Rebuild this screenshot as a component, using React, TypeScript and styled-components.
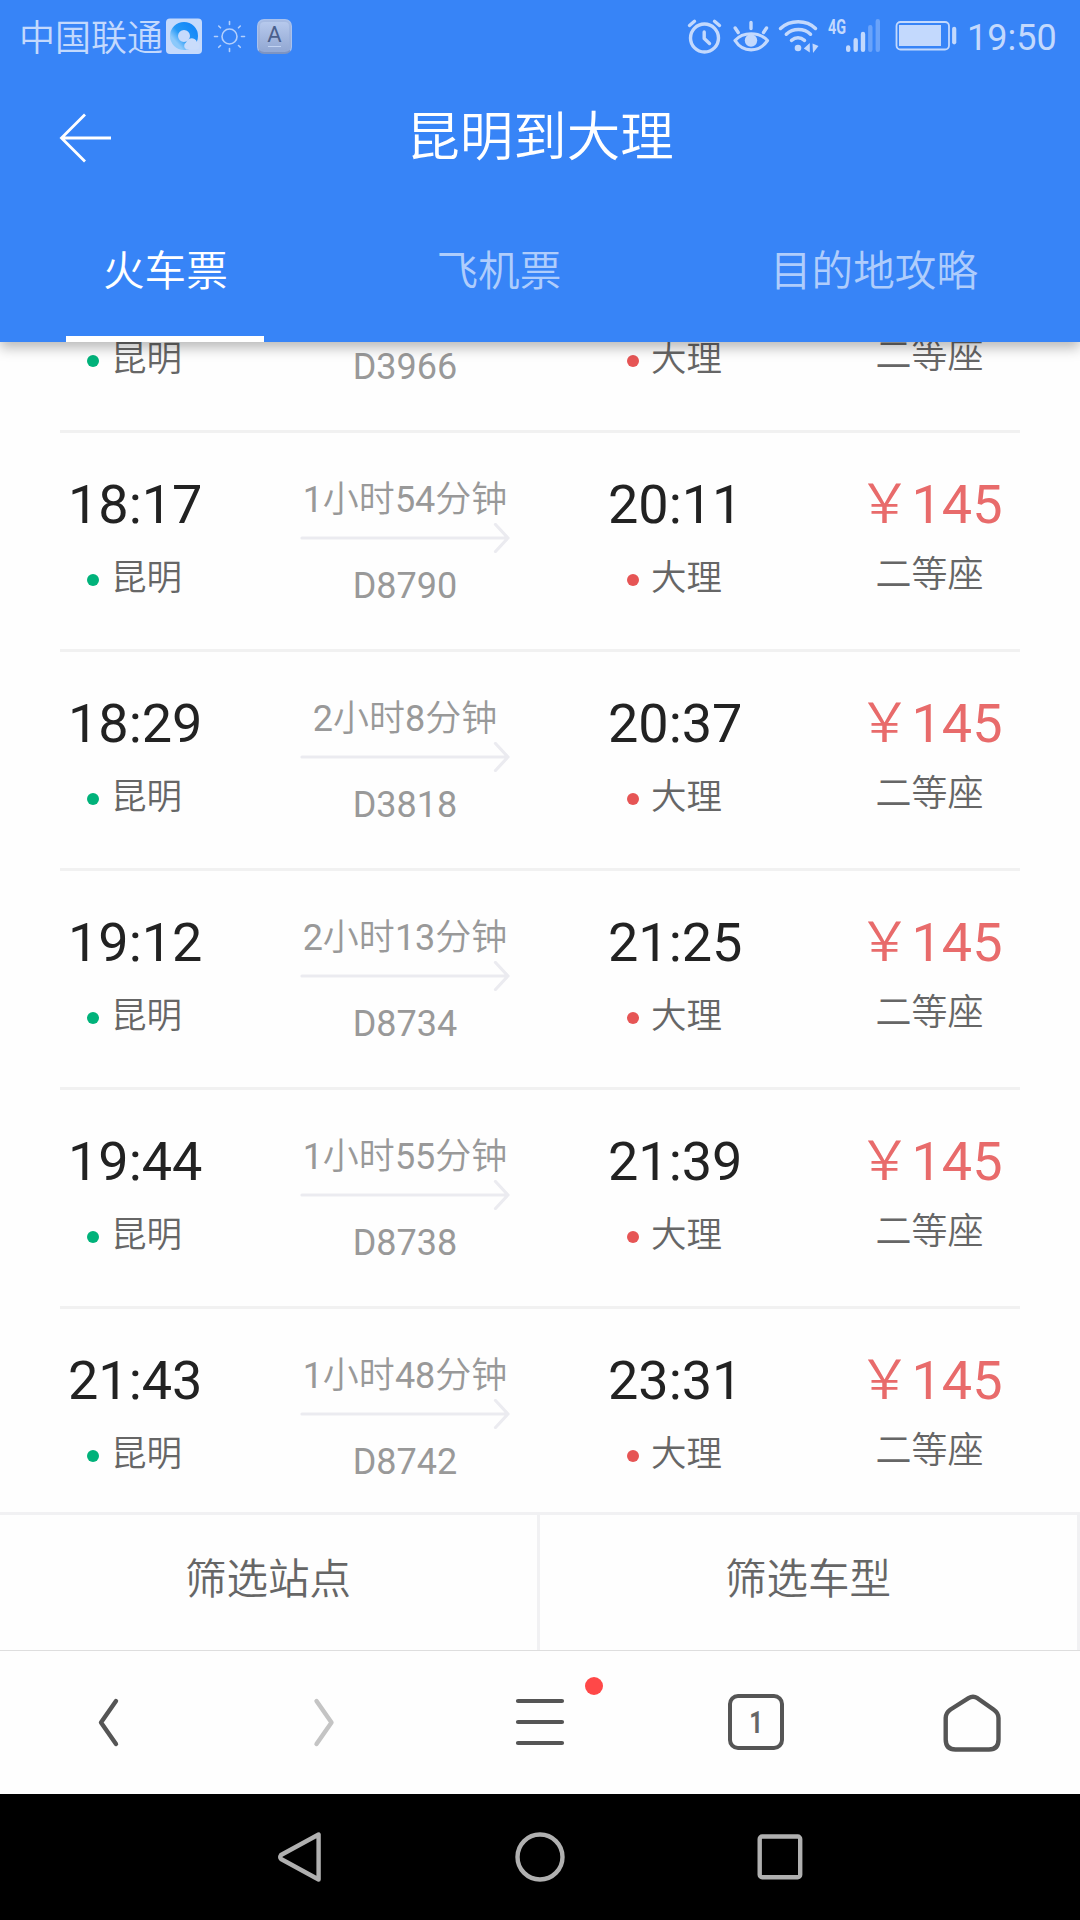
import React from 'react';
import styled, { createGlobalStyle } from 'styled-components';

const GlobalStyle = createGlobalStyle`
  * { box-sizing: border-box; }
  body {
    margin: 0;
    background: #fff;
    font-family: Roboto, "Noto Sans CJK SC", sans-serif;
  }
`;

const Screen = styled.div`
  width: 1080px;
  height: 1920px;
  display: flex;
  flex-direction: column;
  overflow: hidden;
  background: #fefefe;
`;

const Header = styled.header`
  position: relative;
  z-index: 1;
  flex: none;
  height: 342px;
  display: flex;
  flex-direction: column;
  background: #3784f7;
  box-shadow: 0 6px 12px rgba(0, 0, 0, 0.27);
`;

const StatusBar = styled.div`
  height: 74px;
  display: flex;
  align-items: center;
  padding: 0 25px 0 19px;
  color: #c3d9fd;
  svg { display: block; flex: none; }
`;

const Carrier = styled.span`
  width: 145px;
  font-size: 36px;
  font-weight: 350;
  line-height: 40px;
  white-space: nowrap;
  padding-top: 3px;
`;

const Spacer = styled.div`
  flex: 1;
`;

const KeyBadge = styled.span`
  width: 35px;
  height: 35px;
  margin: 0 0 2px 10px;
  border-radius: 7px;
  border: 1px solid #a9c2ee;
  border-bottom: 2px solid #7d94c2;
  background: linear-gradient(#b9cbee, #91a7d2);
  box-shadow: inset 0 0 0 2px rgba(150, 172, 216, 0.5);
  color: #4a5f8c;
  font-size: 22px;
  line-height: 26px;
  padding-top: 2px;
  text-align: center;
  display: flex;
  flex-direction: column;
  align-items: center;
`;

const KeyLine = styled.i`
  width: 13px;
  height: 1px;
  margin-top: -2px;
  background: #c3d4f2;
`;

const NetworkType = styled.span`
  width: 18px;
  height: 74px;
  padding-top: 17px;
  font-size: 20px;
  font-weight: 700;
  line-height: 20px;
  transform: scaleX(0.72);
  transform-origin: 0 0;
`;

const Clock = styled.span`
  width: 88px;
  font-size: 36px;
  line-height: 40px;
  padding-top: 1px;
  white-space: nowrap;
`;

const TitleBar = styled.div`
  height: 124px;
  display: grid;
  grid-template-columns: 112px 1fr 112px;
  align-items: center;
  svg { display: block; margin: 4px 0 0 58px; }
`;

const Title = styled.h1`
  margin: 3px 0 0;
  color: #fff;
  font-size: 53.5px;
  font-weight: 350;
  line-height: 64px;
  text-align: center;
`;

const Tabs = styled.nav`
  flex: 1;
  display: flex;
  justify-content: space-between;
  padding: 0 66px;
`;

const Tab = styled.button<{ $active?: boolean }>`
  border: 0;
  border-bottom: 6px solid ${p => (p.$active ? '#fff' : 'transparent')};
  background: none;
  padding: 10px 36px 0 37px;
  color: ${p => (p.$active ? '#fff' : '#afcdfc')};
  font: 350 41.600px/48px Roboto, "Noto Sans CJK SC", sans-serif;
`;

const ListViewport = styled.main`
  flex: none;
  height: 1170px;
  overflow: hidden;
`;

const List = styled.ul`
  list-style: none;
  margin: -128px 60px 0;
  padding: 0;
`;

const TrainRow = styled.li`
  height: 219px;
  display: grid;
  grid-template-columns: 240px 300px 240px 180px;
  border-bottom: 3px solid #f1f1f1;
`;

const Stop = styled.div`
  display: flex;
  flex-direction: column;
  padding: 42px 0 0 8px;
`;

const Time = styled.strong`
  height: 60px;
  color: #222;
  font-size: 54px;
  font-weight: 400;
  line-height: 60px;
`;

const Station = styled.span<{ $dot: string }>`
  display: flex;
  align-items: center;
  gap: 12px;
  margin: 23px 0 0 19px;
  color: #666;
  font-size: 35.5px;
  font-weight: 350;
  line-height: 40px;
  &::before {
    content: '';
    width: 12px;
    height: 12px;
    margin-top: 4px;
    border-radius: 50%;
    background: ${p => p.$dot};
  }
`;

const Journey = styled.div`
  width: 210px;
  display: flex;
  flex-direction: column;
  align-items: center;
  padding-top: 47px;
  color: #999;
  font-size: 36px;
  line-height: 40px;
  white-space: nowrap;
  svg { display: block; margin: 3px 0 13px; }
`;

const Duration = styled.span`
  height: 40px;
`;

const Han = styled.span`
  font-weight: 350;
`;

const Num = styled.span`
  font-weight: 400;
`;

const Fare = styled.div`
  display: flex;
  flex-direction: column;
  align-items: center;
  padding-top: 42px;
`;

const Price = styled.strong`
  height: 60px;
  color: #e86b6b;
  font-size: 54px;
  font-weight: 400;
  line-height: 60px;
  white-space: nowrap;
`;

const Seat = styled.span`
  margin: 20px 1px 0 0;
  color: #666;
  font-size: 36px;
  font-weight: 350;
  line-height: 40px;
`;

const FilterBar = styled.div`
  flex: none;
  height: 138px;
  display: grid;
  grid-template-columns: 1fr 1fr;
  border-top: 3px solid #f1f1f3;
`;

const FilterButton = styled.button`
  border: 0;
  border-right: 3px solid #f1f1f3;
  background: #fefefe;
  padding: 0 1px 5px 0;
  color: #666;
  font: 350 41.5px/48px Roboto, "Noto Sans CJK SC", sans-serif;
`;

const Toolbar = styled.div`
  flex: none;
  height: 144px;
  display: grid;
  grid-template-columns: repeat(5, 1fr);
  border-top: 1px solid #dedede;
  background: #fefefe;
`;

const ToolButton = styled.button`
  position: relative;
  display: flex;
  align-items: center;
  justify-content: center;
  border: 0;
  padding: 0 0 2px;
  background: none;
  font-family: Roboto, sans-serif;
  svg { display: block; }
`;

const Unread = styled.i`
  position: absolute;
  left: 153px;
  top: 26px;
  width: 18px;
  height: 18px;
  border-radius: 50%;
  background: #ff4848;
`;

const TabCount = styled.span`
  width: 56px;
  height: 56px;
  display: flex;
  align-items: center;
  justify-content: center;
  border: 4px solid #555;
  border-radius: 10px;
  color: #666;
  font-size: 32px;
  line-height: 40px;
  b { display: block; font-weight: 700; transform: scaleX(0.75); }
`;

const SystemNav = styled.div`
  flex: 1;
  display: grid;
  grid-template-columns: repeat(3, 240px);
  justify-content: center;
  align-items: center;
  justify-items: center;
  background: #000;
  svg { display: block; }
`;

/* Status glyphs share one coordinate space: x is the glyph's place along the bar. */
const StatusGlyph = ({ x, w, children }: { x: number; w: number; children: React.ReactNode }) => (
  <svg width={w} height={74} viewBox={`${x} 0 ${w} 74`} fill="none" stroke="#c3d9fd" strokeLinecap="round" strokeLinejoin="round">
    {children}
  </svg>
);

const renderDuration = (text: string) =>
  text.split(/(\d+)/).filter(Boolean).map((part, i) =>
    /\d/.test(part) ? <Num key={i}>{part}</Num> : <Han key={i}>{part}</Han>
  );

/* The first train is scrolled half under the header, so only its lower line is filled in. */
const trains = [
  { from: '', to: '', time: '', no: 'D3966', price: 0 },
  { from: '18:17', to: '20:11', time: '1小时54分钟', no: 'D8790', price: 145 },
  { from: '18:29', to: '20:37', time: '2小时8分钟', no: 'D3818', price: 145 },
  { from: '19:12', to: '21:25', time: '2小时13分钟', no: 'D8734', price: 145 },
  { from: '19:44', to: '21:39', time: '1小时55分钟', no: 'D8738', price: 145 },
  { from: '21:43', to: '23:31', time: '1小时48分钟', no: 'D8742', price: 145 },
];

export default function App() {
  return (
    <>
      <GlobalStyle />
      <Screen>
        <Header>
          <StatusBar>
            <Carrier>中国联通</Carrier>
            <StatusGlyph x={164} w={40}>
              <defs>
                <linearGradient id="ring" x1="0.9" y1="0.1" x2="0.1" y2="0.8">
                  <stop offset="0" stopColor="#1689f8" />
                  <stop offset="0.6" stopColor="#2599f6" />
                  <stop offset="1" stopColor="#8cc9fb" />
                </linearGradient>
              </defs>
              <rect x="166" y="18.5" width="36" height="35.5" rx="4" fill="#c5dafc" stroke="none" />
              <circle cx="184" cy="36" r="10" stroke="url(#ring)" strokeWidth="8" />
              <path d="M186.500 49.500a4 4 0 0 1-.5-7a6 6 0 0 1 8.500-3.500q2 1 2.500 3.200a3.800 3.800 0 0 1-.5 7.300z" fill="#c9dcfb" stroke="none" />
            </StatusGlyph>
            <StatusGlyph x={204} w={43}>
              <g strokeWidth="1.6" stroke="#b3cffc">
                <circle cx="229.500" cy="36.500" r="7.500" />
                <path d="M229.500 21.500v3M229.500 48.500v3M214.500 36.500h3M241.500 36.500h3M218.700 26l1.800 1.800M238.500 45.500l1.800 1.800M240.300 26l-1.800 1.800M220.500 45.500l-1.800 1.800" />
              </g>
            </StatusGlyph>
            <KeyBadge>A<KeyLine /></KeyBadge>
            <Spacer />
            <StatusGlyph x={684} w={44}>
              <g strokeWidth="3.4">
                <circle cx="704.500" cy="38" r="14" />
                <path d="M704.200 32v6.500l5.300 5" />
                <path d="M689.500 25.500l5-4.200M719.500 25.500l-5-4.200" />
              </g>
            </StatusGlyph>
            <StatusGlyph x={728} w={46}>
              <path d="M735 40.500C743 31.500 759 31.500 767.500 40.500C759 53 743 53 735 40.500z" strokeWidth="3.2" />
              <circle cx="751" cy="40.500" r="6.200" fill="#c3d9fd" stroke="none" />
              <path d="M751 22.500v6M735.200 28l3 4.500M766.500 28l-3 4.500" strokeWidth="3.4" />
            </StatusGlyph>
            <StatusGlyph x={774} w={54}>
              <path d="M780.500 28.500C790 19.500 806.500 19.500 815.500 28.500M786.300 34.200C793 28 804 28 810.500 34.200M791.500 40.300C795.500 37 800.500 37 804.500 40.300" strokeWidth="3.500" />
              <circle cx="798" cy="48" r="3.300" fill="#c3d9fd" stroke="none" />
              <path d="M803.800 48.500l6-5.500v9.500zM812.500 43.500l6 2.500l-5.500 7z" fill="#c3d9fd" stroke="none" />
            </StatusGlyph>
            <NetworkType>4G</NetworkType>
            <StatusGlyph x={846} w={47}>
              <g strokeWidth="4.400">
                <path d="M848.200 47.500v2.300M855.700 40.300v9.500M863 34v15.800" />
                <path d="M870.300 27.300v22.500M877.800 21.300v28.500" stroke="#6aa3fa" />
              </g>
            </StatusGlyph>
            <StatusGlyph x={893} w={74}>
              <rect x="896.500" y="22" width="52.500" height="27.500" rx="4" strokeWidth="1.800" />
              <rect x="899" y="25" width="42" height="21" fill="#c3d9fd" stroke="none" />
              <path d="M954.200 28.800v13.500" strokeWidth="4.200" />
            </StatusGlyph>
            <Clock>19:50</Clock>
          </StatusBar>
          <TitleBar>
            <svg width="56" height="52" viewBox="58 112 56 52" fill="none" stroke="#fff" strokeWidth="2.800">
              <path d="M111 138H61.500M85 114.500L61.500 138L85 161.500" />
            </svg>
            <Title>昆明到大理</Title>
          </TitleBar>
          <Tabs>
            <Tab $active>火车票</Tab>
            <Tab>飞机票</Tab>
            <Tab>目的地攻略</Tab>
          </Tabs>
        </Header>

        <ListViewport>
          <List>
            {trains.map(t => (
              <TrainRow key={t.no}>
                <Stop>
                  <Time>{t.from}</Time>
                  <Station $dot="#00b27a">昆明</Station>
                </Stop>
                <Journey>
                  <Duration>{renderDuration(t.time)}</Duration>
                  <svg width="210" height="30" viewBox="0 0 210 30" fill="none" stroke="#ebebf0" strokeWidth="3.200" strokeLinecap="round" strokeLinejoin="round">
                    <path d="M2 15H208M195.500 1.500L208 15L195.500 28.500" />
                  </svg>
                  <Num>{t.no}</Num>
                </Journey>
                <Stop>
                  <Time>{t.to}</Time>
                  <Station $dot="#e65555">大理</Station>
                </Stop>
                <Fare>
                  <Price>{t.price > 0 && <><Han>￥</Han>{t.price}</>}</Price>
                  <Seat>二等座</Seat>
                </Fare>
              </TrainRow>
            ))}
          </List>
        </ListViewport>

        <FilterBar>
          <FilterButton>筛选站点</FilterButton>
          <FilterButton>筛选车型</FilterButton>
        </FilterBar>

        <Toolbar>
          <ToolButton>
            <svg width="60" height="60" viewBox="78 1692 60 60" fill="none" stroke="#555" strokeWidth="4.400" strokeLinecap="round" strokeLinejoin="round">
              <path d="M116 1701L101 1722.500L116 1744" />
            </svg>
          </ToolButton>
          <ToolButton>
            <svg width="60" height="60" viewBox="294 1692 60 60" fill="none" stroke="#c4c4c4" strokeWidth="4.400" strokeLinecap="round" strokeLinejoin="round">
              <path d="M316.500 1701L331.500 1722.500L316.500 1744" />
            </svg>
          </ToolButton>
          <ToolButton>
            <svg width="60" height="60" viewBox="510 1692 60 60" fill="none" stroke="#555" strokeWidth="4.200" strokeLinecap="round">
              <path d="M518 1701H562M518 1722H562M518 1743H562" />
            </svg>
            <Unread />
          </ToolButton>
          <ToolButton>
            <TabCount><b>1</b></TabCount>
          </ToolButton>
          <ToolButton>
            <svg width="60" height="60" viewBox="942 1692 60 60" fill="none" stroke="#555" strokeWidth="4.400" strokeLinejoin="round">
              <path d="M968.500 1698.200Q973 1695.500 977.500 1698.200L993.500 1709.500Q998.500 1713 998.500 1718V1739.500Q998.500 1749.500 989 1749.500H955.500Q945.700 1749.500 945.700 1739.500V1718Q945.700 1713 950.500 1709.500z" />
            </svg>
          </ToolButton>
        </Toolbar>

        <SystemNav>
          <svg width="60" height="60" viewBox="270 1827 60 60" fill="none" stroke="#b0b0b0" strokeWidth="4.400" strokeLinejoin="round">
            <path d="M318.600 1834.500V1879.500L281 1859Q279.500 1857 281 1855z" />
          </svg>
          <svg width="60" height="60" viewBox="0 0 60 60" fill="none" stroke="#b0b0b0" strokeWidth="4.400">
            <circle cx="30" cy="30" r="22.500" />
          </svg>
          <svg width="60" height="60" viewBox="0 0 60 60" fill="none" stroke="#b0b0b0" strokeWidth="4.400">
            <rect x="9.700" y="9.500" width="40.500" height="40.800" rx="2.500" />
          </svg>
        </SystemNav>
      </Screen>
    </>
  );
}
